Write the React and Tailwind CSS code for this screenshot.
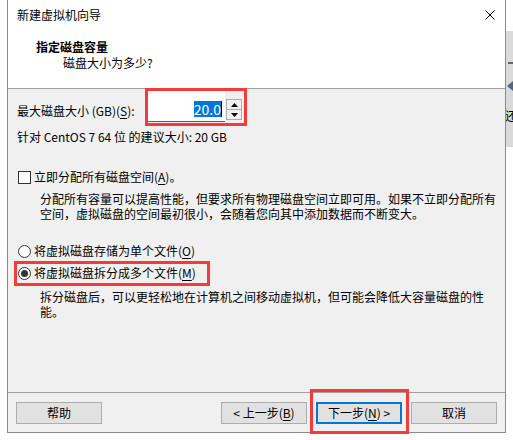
import React from 'react'

function Key({ children }) {
  return <span className="underline underline-offset-[2px] decoration-[1px]">{children}</span>
}

// red annotation boxes drawn over the screenshot
function Mark({ className }) {
  return <span className={`pointer-events-none absolute border-[3px] border-[#f33b3b] ${className}`} />
}

function Button({ children, primary }) {
  return (
    <button
      className={`flex h-[22px] w-[86px] items-center justify-center bg-[#e1e1e1] text-[12px] leading-none text-black ${
        primary ? 'border-2 border-[#0078d7]' : 'border border-[#adadad]'
      }`}
    >
      {children}
    </button>
  )
}

function Radio({ checked }) {
  return (
    <span className="flex h-[13px] w-[13px] shrink-0 items-center justify-center rounded-full border border-[#333] bg-white">
      {checked && <span className="h-[7px] w-[7px] rounded-full bg-[#333]" />}
    </span>
  )
}

function Spinner() {
  return (
    <div className="ml-[1px] mt-[8px] flex h-[21px] w-[16px] flex-col border border-[#adadad] bg-[#f0f0f0]">
      <div className="flex flex-1 items-center justify-center border-b border-[#adadad]">
        <svg width="7" height="4" viewBox="0 0 7 4"><path d="M0 4 L3.5 0 L7 4 Z" fill="#000" /></svg>
      </div>
      <div className="flex flex-1 items-center justify-center">
        <svg width="7" height="4" viewBox="0 0 7 4"><path d="M0 0 L3.5 4 L7 0 Z" fill="#000" /></svg>
      </div>
    </div>
  )
}

export default function App() {
  return (
    <div className="flex h-[440px] w-[513px] overflow-hidden bg-white font-['Noto_Sans_CJK_SC','Microsoft_YaHei',sans-serif] text-[12px] text-black">
      <div className="ml-[7px] flex h-[433px] w-[499px] shrink-0 flex-col border-x border-b border-[#8a8a8a] bg-[#f0f0f0]">
        {/* title bar */}
        <div className="flex h-[30px] shrink-0 items-center justify-between bg-white pl-[9px] pr-[9px]">
          <span className="leading-[16px]">新建虚拟机向导</span>
          <svg width="10" height="10" viewBox="0 0 10 10" className="mr-[1px]">
            <path d="M0.5 0.5 L9.5 9.5 M9.5 0.5 L0.5 9.5" stroke="#000" strokeWidth="1" />
          </svg>
        </div>

        {/* header */}
        <div className="h-[59px] shrink-0 border-b border-[#a0a0a0] bg-white pl-[28px] pt-[9px]">
          <p className="font-bold leading-[16px]">指定磁盘容量</p>
          <p className="pl-[27px] leading-[16px]">磁盘大小为多少?</p>
        </div>

        {/* body */}
        <div className="flex flex-1 flex-col pl-[9px] pr-[8px]">
          <div className="mt-[2px] flex h-[31px]">
            <span className="mt-[12px] w-[131px] shrink-0 leading-[16px]">
              最大磁盘大小 (GB)(<Key>S</Key>):
            </span>
            <div className="relative flex">
              <div className="flex h-[31px] w-[77px] items-end justify-end border-b border-[#0078d7] bg-white pb-[4px] pr-[3px]">
                <span className="bg-[#0078d7] text-[14px] leading-[16px] text-white">20.0</span>
                <span className="h-[16px] w-[1px] bg-black" />
              </div>
              <Spinner />
              <Mark className="-left-[3px] -top-[3px] -right-[5px] -bottom-[4px]" />
            </div>
          </div>

          <p className="mt-[7px] leading-[16px]">针对 CentOS 7 64 位 的建议大小: 20 GB</p>

          <div className="mt-[24px] flex items-center gap-[3px] leading-[16px]">
            <span className="ml-[1px] h-[13px] w-[13px] shrink-0 border border-[#333] bg-white" />
            <span>
              立即分配所有磁盘空间(<Key>A</Key>)。
            </span>
          </div>
          <p className="mt-[6px] pl-[23px] leading-[15px]">
            分配所有容量可以提高性能，但要求所有物理磁盘空间立即可用。如果不立即分配所有
            <br />
            空间，虚拟磁盘的空间最初很小，会随着您向其中添加数据而不断变大。
          </p>

          <div className="mt-[22px] flex items-center gap-[3px] leading-[16px]">
            <span className="ml-[1px]"><Radio /></span>
            <span>
              将虚拟磁盘存储为单个文件(<Key>O</Key>)
            </span>
          </div>
          <div className="relative mt-[6px] flex items-center gap-[3px] leading-[16px]">
            <span className="ml-[1px]"><Radio checked /></span>
            <span>
              将虚拟磁盘拆分成多个文件(<Key>M</Key>)
            </span>
            <Mark className="-left-[3px] -top-[4px] -bottom-[5px] w-[196px]" />
          </div>
          <p className="mt-[8px] pl-[23px] leading-[15px]">
            拆分磁盘后，可以更轻松地在计算机之间移动虚拟机，但可能会降低大容量磁盘的性
            <br />
            能。
          </p>
        </div>

        {/* footer */}
        <div className="flex h-[40px] shrink-0 items-start border-t border-[#a0a0a0] pl-[8px] pr-[8px] pt-[9px]">
          <Button>帮助</Button>
          <div className="flex-1" />
          <div className="flex gap-[9px]">
            <Button>
              &lt; 上一步(<Key>B</Key>)
            </Button>
            <div className="relative">
              <Button primary>
                下一步(<Key>N</Key>) &gt;
              </Button>
              <Mark className="-left-[6px] -top-[13px] -right-[7px] -bottom-[10px]" />
            </div>
            <Button>取消</Button>
          </div>
        </div>
      </div>

      {/* sliver of the window behind */}
      <div className="flex w-[7px] shrink-0 flex-col">
        <div className="h-[31px] bg-white" />
        <div className="relative h-[116px] overflow-hidden bg-[#dadada]">
          <span className="absolute left-[2px] top-[31px] h-[2px] w-[5px] bg-[#56677a]" />
          <span className="absolute left-[1px] top-[50px] h-0 w-0 border-y-[5px] border-r-[6px] border-y-transparent border-r-[#56677a]" />
          <span className="absolute -left-[1px] top-[78px] text-[12px] leading-[14px]">还</span>
        </div>
      </div>
    </div>
  )
}
